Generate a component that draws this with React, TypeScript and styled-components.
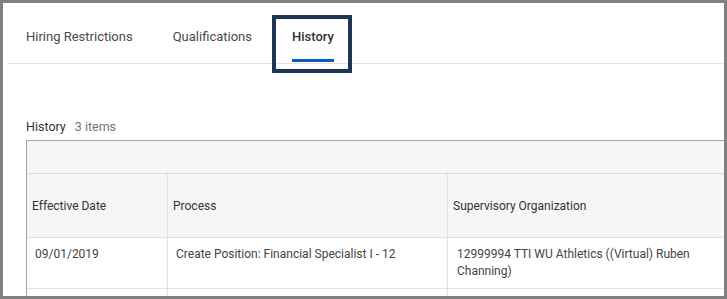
import styled, { createGlobalStyle } from 'styled-components';

const GlobalStyle = createGlobalStyle`
  html, body {
    margin: 0;
    padding: 0;
    background: #ffffff;
  }
  body {
    font-family: Roboto, 'Liberation Sans', sans-serif;
    color: #333333;
  }
`;

interface HistoryRow {
  date: string;
  process: string;
  organization: string;
}

const tabs = ['Hiring Restrictions', 'Qualifications', 'History'];
const activeTab = 'History';

const rows: HistoryRow[] = [
  {
    date: '09/01/2019',
    process: 'Create Position: Financial Specialist I - 12',
    organization: '12999994 TTI WU Athletics ((Virtual) Ruben Channing)'
  }
];

const App = () => {
  return (
    <>
      <GlobalStyle />
      <Frame>
        <TabBar>
          {tabs.map((tab) => (
            <Tab key={tab} $active={tab === activeTab}>
              {tab}
              {tab === activeTab && <Highlight />}
            </Tab>
          ))}
        </TabBar>
        <Section>
          <Title>
            History<Count>3 items</Count>
          </Title>
          <Table>
            <Toolbar />
            <HeaderRow>
              <HeaderCell>Effective Date</HeaderCell>
              <HeaderCell>Process</HeaderCell>
              <HeaderCell>Supervisory Organization</HeaderCell>
            </HeaderRow>
            {rows.map((row) => (
              <BodyRow key={row.date}>
                <Cell>{row.date}</Cell>
                <Cell>{row.process}</Cell>
                <Cell>{row.organization}</Cell>
              </BodyRow>
            ))}
            <BodyRow>
              <Cell />
              <Cell />
              <Cell />
            </BodyRow>
          </Table>
        </Section>
      </Frame>
    </>
  );
};

export default App;

const Frame = styled.div`
  width: 727px;
  height: 299px;
  box-sizing: border-box;
  border: 3px solid #808080;
  background: #ffffff;
  overflow: hidden;
`;

const TabBar = styled.div`
  display: flex;
  gap: 40px;
  height: 60px;
  margin-left: 4px;
  padding-left: 19px;
  border-bottom: 1px solid #e3e3e3;
`;

const Tab = styled.div<{ $active: boolean }>`
  position: relative;
  padding-top: 25px;
  line-height: 18px;
  font-size: 13px;
  font-weight: ${(p) => (p.$active ? 500 : 400)};
  color: ${(p) => (p.$active ? '#333333' : '#4a4a4a')};
  white-space: nowrap;

  &::after {
    content: '';
    display: ${(p) => (p.$active ? 'block' : 'none')};
    position: absolute;
    left: 0;
    right: 0;
    bottom: 1px;
    height: 3px;
    background: #0b5cb8;
  }
`;

const Highlight = styled.span`
  position: absolute;
  left: -20px;
  right: -18px;
  top: 12px;
  height: 58px;
  box-sizing: border-box;
  border: 4px solid #1e3459;
`;

const Section = styled.div`
  padding: 55px 0 0 23px;
`;

const Title = styled.div`
  font-size: 12.5px;
  line-height: 16px;
  color: #333333;
  margin-bottom: 5px;
`;

const Count = styled.span`
  margin-left: 9px;
  font-size: 12.5px;
  color: #6e7378;
`;

const Table = styled.div`
  width: 820px;
  border-top: 1px solid #a6a6a6;
  border-left: 1px solid #a6a6a6;
`;

const Toolbar = styled.div`
  height: 32px;
  background: #f6f6f6;
  border-bottom: 1px solid #dcdcdc;
`;

const Row = styled.div`
  display: grid;
  grid-template-columns: 140px 280px 300px 1fr;
  border-bottom: 1px solid #e2e2e2;
`;

const HeaderRow = styled(Row)`
  height: 63px;
  background: #f6f6f6;
`;

const BodyRow = styled(Row)`
  height: 50px;
  background: #ffffff;
`;

const HeaderCell = styled.div`
  display: flex;
  align-items: center;
  padding-left: 5px;
  font-size: 12px;
  color: #333333;
  & + & {
    border-left: 1px solid #e2e2e2;
  }
`;

const Cell = styled.div`
  padding: 8px 12px 0 8px;
  font-size: 12px;
  line-height: 17px;
  color: #444444;
  & + & {
    border-left: 1px solid #e2e2e2;
  }
  &:nth-child(3) {
    padding-left: 9px;
  }
`;
